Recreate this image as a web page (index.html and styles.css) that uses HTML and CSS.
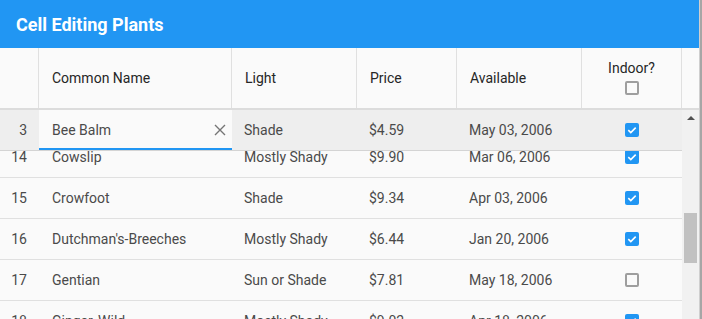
FILE: index.html
```html
<!DOCTYPE html>
<html>
<head>
<meta charset="utf-8">
<link rel="stylesheet" href="styles.css">
</head>
<body>
<div class="page">
  <div class="grid">
    <div class="titlebar">Cell Editing Plants</div>
    <div class="head">
      <div class="hcell num"></div>
      <div class="hcell">Common Name</div>
      <div class="hcell">Light</div>
      <div class="hcell">Price</div>
      <div class="hcell">Available</div>
      <div class="hcell check-head">
        <span>Indoor?</span>
        <span class="cb"></span>
      </div>
      <div class="hfill"></div>
    </div>
    <div class="bodywrap">
      <div class="rowsarea">
        <div class="row selected">
          <div class="cell num">3</div>
          <div class="cell editor">
            <span>Bee Balm</span>
            <svg class="clear" width="12" height="12" viewBox="0 0 12 12"><path d="M1 1L11 11M11 1L1 11" stroke="#757575" stroke-width="1.4" fill="none"/></svg>
          </div>
          <div class="cell">Shade</div>
          <div class="cell">$4.59</div>
          <div class="cell">May 03, 2006</div>
          <div class="cell center"><span class="cb on"><svg width="14" height="14" viewBox="0 0 14 14"><path d="M3.3 7.2L5.8 9.6L10.7 4.6" stroke="#fff" stroke-width="1.6" fill="none"/></svg></span></div>
        </div>
        <div class="scroll">
          <div class="rows">
            <div class="row">
              <div class="cell num">14</div>
              <div class="cell name">Cowslip</div>
              <div class="cell">Mostly Shady</div>
              <div class="cell">$9.90</div>
              <div class="cell">Mar 06, 2006</div>
              <div class="cell center"><span class="cb on"><svg width="14" height="14" viewBox="0 0 14 14"><path d="M3.3 7.2L5.8 9.6L10.7 4.6" stroke="#fff" stroke-width="1.6" fill="none"/></svg></span></div>
            </div>
            <div class="row">
              <div class="cell num">15</div>
              <div class="cell name">Crowfoot</div>
              <div class="cell">Shade</div>
              <div class="cell">$9.34</div>
              <div class="cell">Apr 03, 2006</div>
              <div class="cell center"><span class="cb on"><svg width="14" height="14" viewBox="0 0 14 14"><path d="M3.3 7.2L5.8 9.6L10.7 4.6" stroke="#fff" stroke-width="1.6" fill="none"/></svg></span></div>
            </div>
            <div class="row">
              <div class="cell num">16</div>
              <div class="cell name">Dutchman's-Breeches</div>
              <div class="cell">Mostly Shady</div>
              <div class="cell">$6.44</div>
              <div class="cell">Jan 20, 2006</div>
              <div class="cell center"><span class="cb on"><svg width="14" height="14" viewBox="0 0 14 14"><path d="M3.3 7.2L5.8 9.6L10.7 4.6" stroke="#fff" stroke-width="1.6" fill="none"/></svg></span></div>
            </div>
            <div class="row">
              <div class="cell num">17</div>
              <div class="cell name">Gentian</div>
              <div class="cell">Sun or Shade</div>
              <div class="cell">$7.81</div>
              <div class="cell">May 18, 2006</div>
              <div class="cell center"><span class="cb"></span></div>
            </div>
            <div class="row">
              <div class="cell num">18</div>
              <div class="cell name">Ginger, Wild</div>
              <div class="cell">Mostly Shady</div>
              <div class="cell">$9.02</div>
              <div class="cell">Apr 18, 2006</div>
              <div class="cell center"><span class="cb on"><svg width="14" height="14" viewBox="0 0 14 14"><path d="M3.3 7.2L5.8 9.6L10.7 4.6" stroke="#fff" stroke-width="1.6" fill="none"/></svg></span></div>
            </div>
          </div>
        </div>
      </div>
      <div class="vscroll">
        <div class="arrow"></div>
        <div class="thumb"></div>
      </div>
    </div>
  </div>
  <div class="edge"></div>
</div>
</body>
</html>
```

FILE: styles.css
```css
* { box-sizing: border-box; }
html, body {
  margin: 0;
  padding: 0;
  width: 702px;
  height: 319px;
  overflow: hidden;
  background: #fafafa;
  font-family: Roboto, "Liberation Sans", sans-serif;
}
.page {
  display: flex;
  width: 702px;
  height: 319px;
}
.grid {
  width: 699px;
  display: flex;
  flex-direction: column;
  background: #fafafa;
}
.edge {
  width: 3px;
  background: linear-gradient(to right, #cfcfcf 0, #cfcfcf 1px, #a6a6a6 1px);
}
.titlebar {
  height: 48px;
  background: #2196f3;
  color: #fff;
  font-size: 18px;
  font-weight: 700;
  padding-left: 16px;
  display: flex;
  align-items: center;
}
.head {
  display: grid;
  grid-template-columns: 39px 193px 125px 100px 125px 100px 17px;
  height: 62px;
  border-bottom: 2px solid #dcdcdc;
  color: #262626;
  font-size: 14px;
}
.hcell {
  border-right: 1px solid #e0e0e0;
  display: flex;
  align-items: center;
  padding-left: 13px;
}
.hcell.num { padding: 0; }
.check-head {
  flex-direction: column;
  justify-content: center;
  padding-left: 0;
  gap: 5px;
  padding-bottom: 2px;
}
.check-head span:first-child { line-height: 16px; }
.bodywrap {
  flex: 1;
  display: flex;
  min-height: 0;
}
.rowsarea {
  width: 682px;
  display: flex;
  flex-direction: column;
  min-height: 0;
}
.row {
  display: grid;
  grid-template-columns: 39px 193px 125px 100px 125px 100px;
  height: 41px;
  border-bottom: 1px solid #e0e0e0;
  font-size: 14px;
  color: #4a4a4a;
  flex-shrink: 0;
}
.row.selected {
  background: #eeeeee;
  border-bottom-color: #d4d4d4;
}
.cell {
  display: flex;
  align-items: center;
  padding-left: 12px;
  white-space: nowrap;
  overflow: hidden;
}
.cell.num {
  justify-content: flex-end;
  padding-left: 0;
  padding-right: 12px;
}
.cell.name { padding-left: 13px; }
.cell.center {
  justify-content: center;
  padding-left: 0;
  padding-right: 1px;
}
.cell.editor {
  background: #fafafa;
  border-bottom: 2px solid #2196f3;
  padding-left: 13px;
  padding-right: 6px;
  justify-content: space-between;
  padding-top: 2px;
}
.scroll {
  flex: 1;
  overflow: hidden;
  min-height: 0;
}
.rows {
  margin-top: -14px;
}
.cb {
  display: block;
  width: 14px;
  height: 14px;
  border: 2px solid #9e9e9e;
  border-radius: 2px;
}
.cb.on {
  border: none;
  background: #2196f3;
}
.cb svg { display: block; }
.vscroll {
  width: 17px;
  background: #f1f1f1;
  display: flex;
  flex-direction: column;
  align-items: center;
  padding-top: 6px;
}
.arrow {
  width: 0;
  height: 0;
  border-left: 4px solid transparent;
  border-right: 4px solid transparent;
  border-bottom: 4px solid #505050;
}
.thumb {
  margin-top: 93px;
  width: 13px;
  height: 50px;
  background: #c1c1c1;
}
```
